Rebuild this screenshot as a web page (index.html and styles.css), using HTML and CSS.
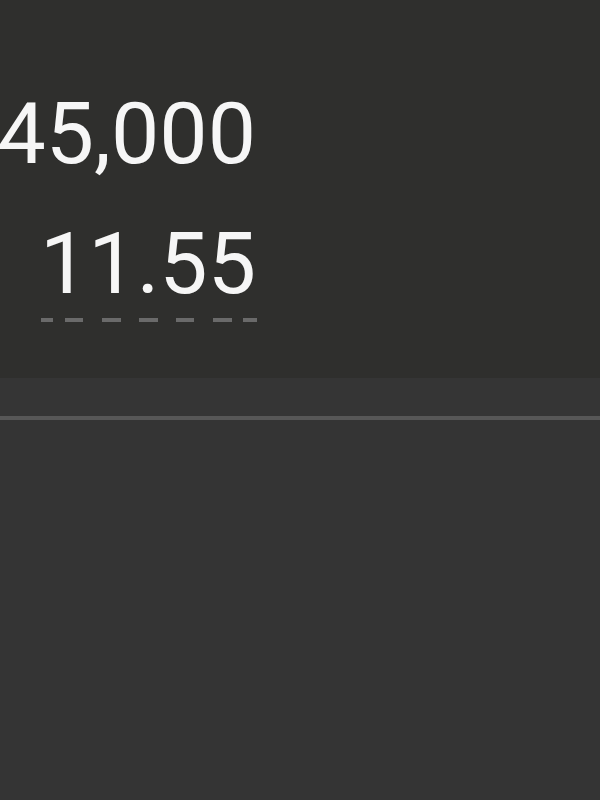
FILE: index.html
```html
<!DOCTYPE html>
<html lang="en">
<head>
    <meta charset="UTF-8">
    <meta name="viewport" content="width=device-width, initial-scale=1.0">
    <title>Calculator</title>
    <link rel="stylesheet" href="styles.css">
</head>
<body>

<div class="display">
    <div class="fields">
        <div class="value">45,000</div>
        <div class="value">11.55</div>
        <svg class="underline" width="216" height="4" viewBox="0 0 216 4">
            <rect x="0" y="0" width="12" height="4"/>
            <rect x="24" y="0" width="18" height="4"/>
            <rect x="61" y="0" width="19" height="4"/>
            <rect x="98" y="0" width="19" height="4"/>
            <rect x="135" y="0" width="18" height="4"/>
            <rect x="172" y="0" width="19" height="4"/>
            <rect x="202" y="0" width="14" height="4"/>
        </svg>
    </div>
</div>

<div class="toolbar"></div>

<div class="keys"></div>

</body>
</html>
```

FILE: styles.css
```css
html, body {
    height: 100%;
}
body {
    font-family: Roboto, 'Noto Sans', sans-serif;
    margin: 0;
    padding: 0;
    background-color: #343434;
    display: flex;
    flex-direction: column;
    overflow: hidden;
}
.display {
    background-color: #2f2f2d;
    height: 378px;
    box-sizing: border-box;
    padding-top: 91px;
}
.fields {
    width: 256px;
    margin-left: 0;
    display: flex;
    flex-direction: column;
    align-items: flex-end;
}
.value {
    color: #f6f6f6;
    font-size: 86px;
    line-height: 86px;
    white-space: nowrap;
}
.value + .value {
    margin-top: 44px;
}
.underline {
    display: block;
    align-self: flex-start;
    margin: 11px 0 0 41px;
    fill: #6a6a6a;
}
.toolbar {
    height: 38px;
    background-color: #353535;
    border-bottom: 4px solid #575757;
}
.keys {
    flex: 1;
    background-color: #343434;
}
```
